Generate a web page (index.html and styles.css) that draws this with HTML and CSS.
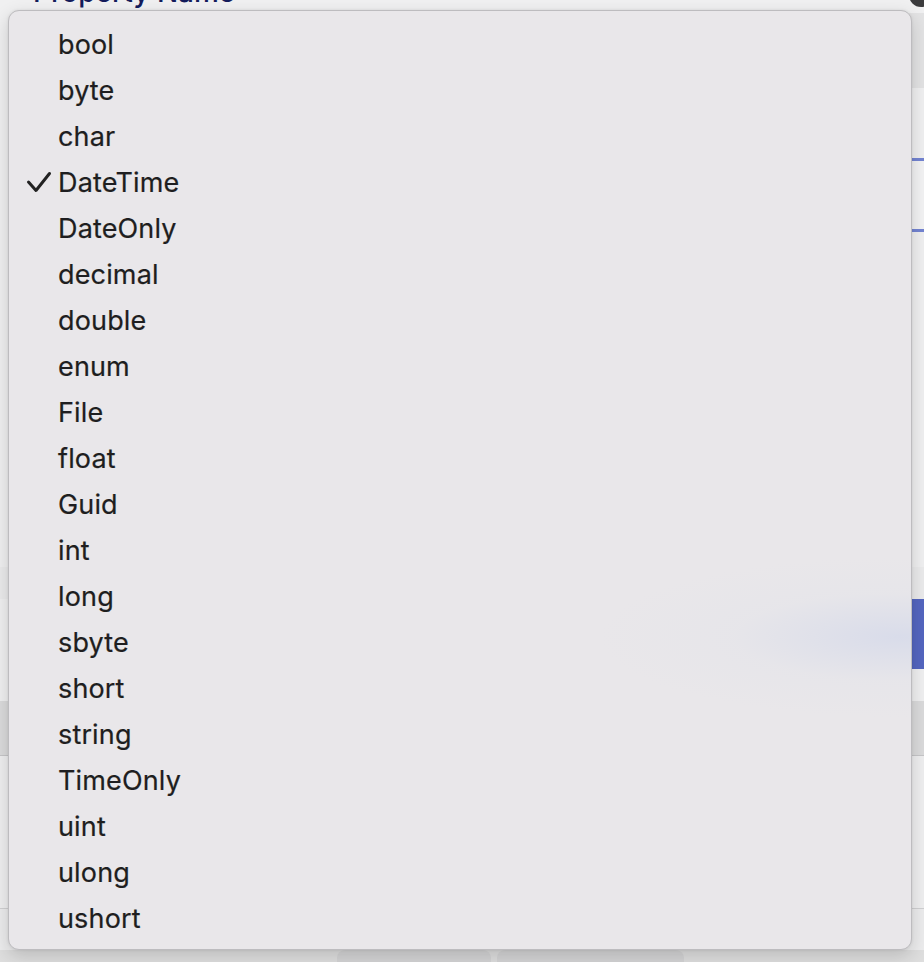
FILE: index.html
```html
<!DOCTYPE html>
<html lang="en">
<head>
<meta charset="utf-8">
<title>Type menu</title>
<link rel="stylesheet" href="styles.css">
</head>
<body>
<div class="page">
  <header class="top">
    <h1 class="title">Property Name</h1>
    <span class="help"></span>
  </header>
  <div class="row band-row"><div class="band"></div></div>
  <div class="gap g1"></div>
  <div class="row field-row"><div class="field"></div></div>
  <div class="gap g2"></div>
  <div class="strip"></div>
  <div class="row btn-row"><div class="btn"></div></div>
  <div class="gap g3"></div>
  <div class="toolbar"></div>
  <div class="list"></div>
  <footer class="footer">
    <div class="footer-bar">
      <span class="fbtn fbtn1"></span>
      <span class="fbtn fbtn2"></span>
    </div>
  </footer>
</div>

<ul class="menu">
  <li>bool</li>
  <li>byte</li>
  <li>char</li>
  <li class="checked"><span class="mark"><svg width="26" height="24" viewBox="0 0 26 24"><polyline points="2.5,12 10,20.5 23.5,3.5" fill="none" stroke="#222" stroke-width="3" stroke-linecap="round" stroke-linejoin="round"/></svg></span>DateTime</li>
  <li>DateOnly</li>
  <li>decimal</li>
  <li>double</li>
  <li>enum</li>
  <li>File</li>
  <li>float</li>
  <li>Guid</li>
  <li>int</li>
  <li>long</li>
  <li>sbyte</li>
  <li>short</li>
  <li>string</li>
  <li>TimeOnly</li>
  <li>uint</li>
  <li>ulong</li>
  <li>ushort</li>
</ul>
</body>
</html>
```

FILE: styles.css
```css
html, body {
  margin: 0;
  padding: 0;
  height: 100%;
  overflow: hidden;
}
body {
  background: #f0f0f1;
  font-family: Inter, "Noto Sans", sans-serif;
  position: relative;
}
.page {
  display: flex;
  flex-direction: column;
  height: 962px;
}
.top {
  height: 13px;
  display: flex;
  justify-content: space-between;
  align-items: flex-start;
  padding-left: 33px;
}
.title {
  margin: -22px 0 0 0;
  font-size: 28px;
  line-height: 28px;
  font-weight: 500;
  color: #141c5c;
}
.help {
  width: 24px;
  height: 24px;
  border-radius: 50%;
  background: #3b3b3d;
  margin: -17px -9px 0 0;
}
.row {
  display: flex;
  justify-content: flex-end;
}
.band-row { height: 75px; }
.band {
  width: 300px;
  background: #e3e3e4;
}
.g1 { height: 70px; }
.field-row { height: 74px; }
.field {
  width: 500px;
  border-top: 3px solid #7384d2;
  border-bottom: 3px solid #7384d2;
  background: #f3f3f4;
}
.g2 { height: 335px; }
.strip {
  height: 32px;
  background: #ebebec;
}
.btn-row { height: 70px; }
.btn {
  width: 260px;
  background: #5466c0;
}
.g3 { height: 32px; }
.toolbar {
  height: 54px;
  background: #dbdbdc;
  border-bottom: 1px solid #c6c6c8;
}
.list {
  height: 152px;
  background: #efeff0;
  border-bottom: 1px solid #d0d0d2;
}
.footer {
  flex: 1;
  display: flex;
  flex-direction: column;
  justify-content: flex-end;
  background: #ececed;
}
.footer-bar {
  height: 12px;
  background: #dedede;
  display: flex;
  padding-left: 337px;
  gap: 6px;
}
.fbtn {
  height: 20px;
  background: #d4d4d5;
  border-radius: 8px 8px 0 0;
}
.fbtn1 { width: 154px; }
.fbtn2 { width: 187px; }

.menu {
  position: absolute;
  left: 8px;
  top: 10px;
  width: 904px;
  height: 940px;
  box-sizing: border-box;
  margin: 0;
  padding: 10px 0 0 0;
  list-style: none;
  border: 1px solid #bdbcbf;
  border-radius: 11px;
  background:
    radial-gradient(ellipse 300px 80px at 890px 626px, rgba(214, 218, 234, 0.85), rgba(226, 227, 234, 0.35) 55%, rgba(233, 231, 234, 0) 100%),
    #e9e7ea;
  box-shadow: 0 6px 18px rgba(0, 0, 0, 0.16), 0 0 3px rgba(0, 0, 0, 0.08);
}
.menu li {
  display: flex;
  align-items: center;
  height: 46px;
  padding-left: 49px;
  font-size: 27px;
  color: #1e1e20;
  letter-spacing: 0.15px;
  -webkit-text-stroke: 0.2px #1e1e20;
}
.menu li.checked {
  padding-left: 0;
}
.mark {
  display: flex;
  align-items: center;
  width: 49px;
  padding-left: 17px;
  box-sizing: border-box;
}
.mark svg {
  display: block;
}
```
